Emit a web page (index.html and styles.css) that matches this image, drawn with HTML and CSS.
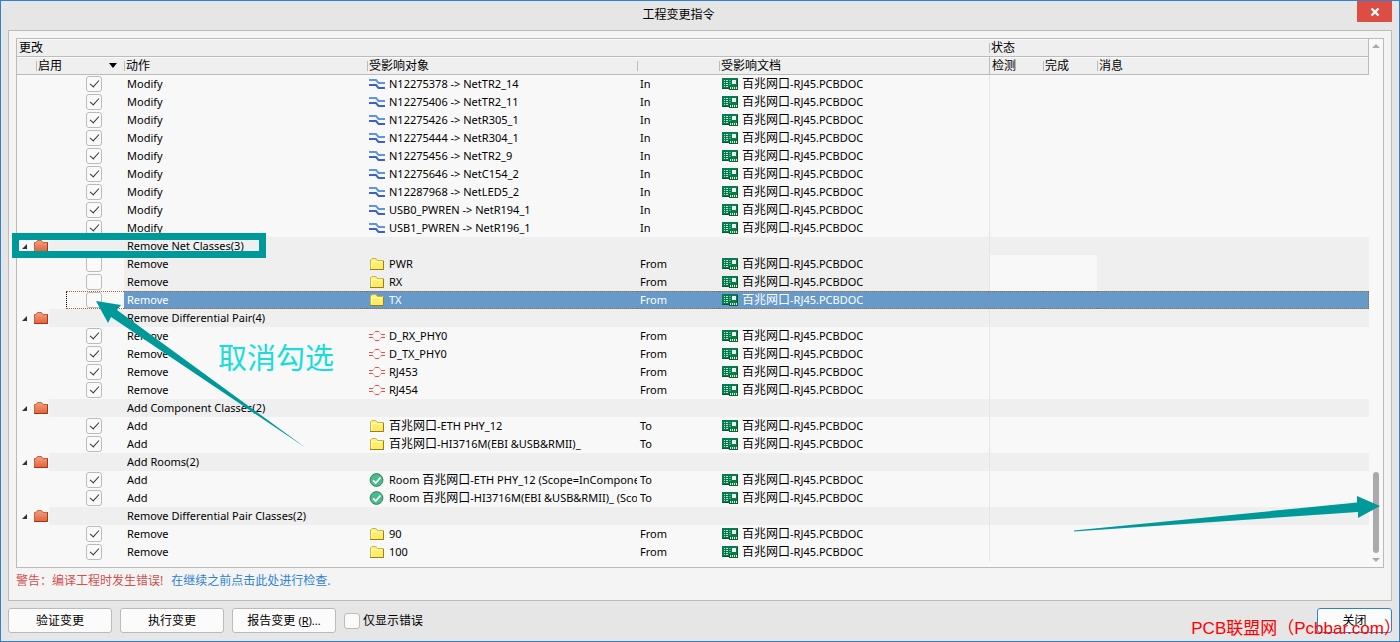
FILE: index.html
```html
<!DOCTYPE html>
<html lang="zh-CN">
<head>
<meta charset="utf-8">
<title>工程变更指令</title>
<link rel="stylesheet" href="styles.css">
</head>
<body>
<svg class="defs" aria-hidden="true">
  <linearGradient id="g-red" x1="0" y1="0" x2="0" y2="1"><stop offset="0" stop-color="#f4a080"/><stop offset="1" stop-color="#dc6440"/></linearGradient>
  <linearGradient id="g-yellow" x1="0" y1="0" x2="0" y2="1"><stop offset="0" stop-color="#fff27a"/><stop offset="1" stop-color="#ffe95e"/></linearGradient>
  <symbol id="group" viewBox="0 0 16 14"><path d="M.500 12.500v-9h1.500l1.500-2h4l1.500 2h5v9z" fill="url(#g-red)"/><path d="M.500 12.500v-9h1.500l1.500-2h4l1.500 2h5" fill="none" stroke="#d0603a"/><path d="M0 12.500h13.500v-9" fill="none" stroke="#b83008"/></symbol>
  <symbol id="folder" viewBox="0 0 16 14"><path d="M1.500 12.500v-9.500l1.500-1.500h4l1.500 2h6v9z" fill="url(#g-yellow)" stroke="#cdb43c"/><path d="M2.500 11.500v-7h5l1 .500h5" fill="none" stroke="#fffbc8"/><path d="M1 12.500h13.500v-8.500" fill="none" stroke="#978016"/></symbol>
  <symbol id="net" viewBox="0 0 16 12"><path d="M0 2h7l2.500 3H16" fill="none" stroke="#5e94e0" stroke-width="2"/><path d="M0 7h7l2.500 3H16" fill="none" stroke="#3c62c8" stroke-width="2"/></symbol>
  <symbol id="pair" viewBox="0 0 16 12"><path d="M0 4.500h4M0 7.500h4M12 4.500h4M12 7.500h4M6 1.500h4M6 10.500h4" stroke="#f04848"/><path d="M4 4.500l2-3M10 1.500l2 3M4 7.500l2 3M10 10.500l2-3" stroke="#f4aaaa" fill="none"/></symbol>
  <symbol id="room" viewBox="0 0 16 14"><circle cx="7.500" cy="7" r="6.400" fill="#45bd8c" stroke="#3b8067"/><path d="M4 7.300l2.700 2.700 4.800-5.500" fill="none" stroke="#fff" stroke-width="1.800"/></symbol>
  <symbol id="pcb" viewBox="0 0 16 12"><path d="M0 0h16v12H7v-1H0z" fill="#087a50"/><path d="M0 10.500h7M7.500 8v4h8V1" fill="none" stroke="#04553a"/><path d="M2 2.500h4M2 4.500h4M2 6.500h4M2 8.500h4" stroke="#b5e3c8"/><path d="M3.500 2v7" stroke="#087a50"/><path d="M7 2.500h2M7 4.500h2M7 6.500h2" stroke="#2fba7e"/><path d="M10 2h4v4h-4z" fill="#e9f5ee"/><path d="M8.500 9v2M10.500 9v2M12.500 9v2M14.500 9v2" stroke="#f7f3b0"/></symbol>
</svg>
<div class="window">
  <header class="titlebar">
    <h1>工程变更指令</h1>
    <button class="close" aria-label="关闭窗口"><svg width="10" height="10" viewBox="0 0 10 10"><path d="M1.500 1.500l7 7M8.500 1.500l-7 7" stroke="#fff" stroke-width="2.400"/></svg></button>
  </header>
  <main class="panel">
    <div class="list">
      <table>
        <colgroup><col class="c-tree"><col class="c-gap"><col class="c-check"><col class="c-action"><col class="c-object"><col class="c-dir"><col class="c-doc"><col class="c-state"><col class="c-done"><col></colgroup>
        <thead>
          <tr><th colspan="7">更改</th><th colspan="3" class="tick">状态</th></tr>
          <tr><th colspan="3" class="enable"><div><span>启用</span><svg width="8" height="5" viewBox="0 0 8 5"><path d="M0 0h8L4 5z"/></svg></div></th><th class="tick">动作</th><th class="tick">受影响对象</th><th class="tick"></th><th class="tick">受影响文档</th><th class="full">检测</th><th class="tick">完成</th><th class="tick">消息</th></tr>
        </thead>
        <tbody>
          <tr><td><td><td class="check"><input type="checkbox" checked aria-label="N12275378"><td>Modify<td><div class="item"><svg class="i12"><use href="#net"/></svg><span>N12275378 -&gt; NetTR2_14</span></div><td>In<td><div class="item doc"><svg class="i12"><use href="#pcb"/></svg><span><b>百兆网口</b>-RJ45.PCBDOC</span></div><td><td><td></tr>
          <tr><td><td><td class="check"><input type="checkbox" checked aria-label="N12275406"><td>Modify<td><div class="item"><svg class="i12"><use href="#net"/></svg><span>N12275406 -&gt; NetTR2_11</span></div><td>In<td><div class="item doc"><svg class="i12"><use href="#pcb"/></svg><span><b>百兆网口</b>-RJ45.PCBDOC</span></div><td><td><td></tr>
          <tr><td><td><td class="check"><input type="checkbox" checked aria-label="N12275426"><td>Modify<td><div class="item"><svg class="i12"><use href="#net"/></svg><span>N12275426 -&gt; NetR305_1</span></div><td>In<td><div class="item doc"><svg class="i12"><use href="#pcb"/></svg><span><b>百兆网口</b>-RJ45.PCBDOC</span></div><td><td><td></tr>
          <tr><td><td><td class="check"><input type="checkbox" checked aria-label="N12275444"><td>Modify<td><div class="item"><svg class="i12"><use href="#net"/></svg><span>N12275444 -&gt; NetR304_1</span></div><td>In<td><div class="item doc"><svg class="i12"><use href="#pcb"/></svg><span><b>百兆网口</b>-RJ45.PCBDOC</span></div><td><td><td></tr>
          <tr><td><td><td class="check"><input type="checkbox" checked aria-label="N12275456"><td>Modify<td><div class="item"><svg class="i12"><use href="#net"/></svg><span>N12275456 -&gt; NetTR2_9</span></div><td>In<td><div class="item doc"><svg class="i12"><use href="#pcb"/></svg><span><b>百兆网口</b>-RJ45.PCBDOC</span></div><td><td><td></tr>
          <tr><td><td><td class="check"><input type="checkbox" checked aria-label="N12275646"><td>Modify<td><div class="item"><svg class="i12"><use href="#net"/></svg><span>N12275646 -&gt; NetC154_2</span></div><td>In<td><div class="item doc"><svg class="i12"><use href="#pcb"/></svg><span><b>百兆网口</b>-RJ45.PCBDOC</span></div><td><td><td></tr>
          <tr><td><td><td class="check"><input type="checkbox" checked aria-label="N12287968"><td>Modify<td><div class="item"><svg class="i12"><use href="#net"/></svg><span>N12287968 -&gt; NetLED5_2</span></div><td>In<td><div class="item doc"><svg class="i12"><use href="#pcb"/></svg><span><b>百兆网口</b>-RJ45.PCBDOC</span></div><td><td><td></tr>
          <tr><td><td><td class="check"><input type="checkbox" checked aria-label="USB0_PWREN"><td>Modify<td><div class="item"><svg class="i12"><use href="#net"/></svg><span>USB0_PWREN -&gt; NetR194_1</span></div><td>In<td><div class="item doc"><svg class="i12"><use href="#pcb"/></svg><span><b>百兆网口</b>-RJ45.PCBDOC</span></div><td><td><td></tr>
          <tr><td><td><td class="check"><input type="checkbox" checked aria-label="USB1_PWREN"><td>Modify<td><div class="item"><svg class="i12"><use href="#net"/></svg><span>USB1_PWREN -&gt; NetR196_1</span></div><td>In<td><div class="item doc"><svg class="i12"><use href="#pcb"/></svg><span><b>百兆网口</b>-RJ45.PCBDOC</span></div><td><td><td></tr>
          <tr class="group"><td><div class="tree"><svg class="tri"><path d="M5 0v5H0z"/></svg><svg class="i14"><use href="#group"/></svg></div><td><td><td>Remove Net Classes(3)<td><td><td><td><td><td></tr>
          <tr class="related"><td><td><td class="check"><input type="checkbox" aria-label="PWR"><td>Remove<td><div class="item"><svg class="i14"><use href="#folder"/></svg><span>PWR</span></div><td>From<td><div class="item doc"><svg class="i12"><use href="#pcb"/></svg><span><b>百兆网口</b>-RJ45.PCBDOC</span></div><td><td><td></tr>
          <tr class="related"><td><td><td class="check"><input type="checkbox" aria-label="RX"><td>Remove<td><div class="item"><svg class="i14"><use href="#folder"/></svg><span>RX</span></div><td>From<td><div class="item doc"><svg class="i12"><use href="#pcb"/></svg><span><b>百兆网口</b>-RJ45.PCBDOC</span></div><td><td><td></tr>
          <tr class="selected"><td><td><td class="check"><input type="checkbox" aria-label="TX"><td>Remove<td><div class="item"><svg class="i14"><use href="#folder"/></svg><span>TX</span></div><td>From<td><div class="item doc"><svg class="i12"><use href="#pcb"/></svg><span><b>百兆网口</b>-RJ45.PCBDOC</span></div><td><td><td></tr>
          <tr class="group"><td><div class="tree"><svg class="tri"><path d="M5 0v5H0z"/></svg><svg class="i14"><use href="#group"/></svg></div><td><td><td>Remove Differential Pair(4)<td><td><td><td><td><td></tr>
          <tr><td><td><td class="check"><input type="checkbox" checked aria-label="D_RX_PHY0"><td>Remove<td><div class="item"><svg class="i12"><use href="#pair"/></svg><span>D_RX_PHY0</span></div><td>From<td><div class="item doc"><svg class="i12"><use href="#pcb"/></svg><span><b>百兆网口</b>-RJ45.PCBDOC</span></div><td><td><td></tr>
          <tr><td><td><td class="check"><input type="checkbox" checked aria-label="D_TX_PHY0"><td>Remove<td><div class="item"><svg class="i12"><use href="#pair"/></svg><span>D_TX_PHY0</span></div><td>From<td><div class="item doc"><svg class="i12"><use href="#pcb"/></svg><span><b>百兆网口</b>-RJ45.PCBDOC</span></div><td><td><td></tr>
          <tr><td><td><td class="check"><input type="checkbox" checked aria-label="RJ453"><td>Remove<td><div class="item"><svg class="i12"><use href="#pair"/></svg><span>RJ453</span></div><td>From<td><div class="item doc"><svg class="i12"><use href="#pcb"/></svg><span><b>百兆网口</b>-RJ45.PCBDOC</span></div><td><td><td></tr>
          <tr><td><td><td class="check"><input type="checkbox" checked aria-label="RJ454"><td>Remove<td><div class="item"><svg class="i12"><use href="#pair"/></svg><span>RJ454</span></div><td>From<td><div class="item doc"><svg class="i12"><use href="#pcb"/></svg><span><b>百兆网口</b>-RJ45.PCBDOC</span></div><td><td><td></tr>
          <tr class="group"><td><div class="tree"><svg class="tri"><path d="M5 0v5H0z"/></svg><svg class="i14"><use href="#group"/></svg></div><td><td><td>Add Component Classes(2)<td><td><td><td><td><td></tr>
          <tr><td><td><td class="check"><input type="checkbox" checked aria-label="ETH PHY_12"><td>Add<td><div class="item"><svg class="i14"><use href="#folder"/></svg><span><b>百兆网口</b>-ETH PHY_12</span></div><td>To<td><div class="item doc"><svg class="i12"><use href="#pcb"/></svg><span><b>百兆网口</b>-RJ45.PCBDOC</span></div><td><td><td></tr>
          <tr><td><td><td class="check"><input type="checkbox" checked aria-label="HI3716M"><td>Add<td><div class="item"><svg class="i14"><use href="#folder"/></svg><span><b>百兆网口</b>-HI3716M(EBI &amp;USB&amp;RMII)_</span></div><td>To<td><div class="item doc"><svg class="i12"><use href="#pcb"/></svg><span><b>百兆网口</b>-RJ45.PCBDOC</span></div><td><td><td></tr>
          <tr class="group"><td><div class="tree"><svg class="tri"><path d="M5 0v5H0z"/></svg><svg class="i14"><use href="#group"/></svg></div><td><td><td>Add Rooms(2)<td><td><td><td><td><td></tr>
          <tr><td><td><td class="check"><input type="checkbox" checked aria-label="Room ETH PHY_12"><td>Add<td><div class="item"><svg class="i14"><use href="#room"/></svg><span>Room <b>百兆网口</b>-ETH PHY_12 (Scope=InCompone</span></div><td>To<td><div class="item doc"><svg class="i12"><use href="#pcb"/></svg><span><b>百兆网口</b>-RJ45.PCBDOC</span></div><td><td><td></tr>
          <tr><td><td><td class="check"><input type="checkbox" checked aria-label="Room HI3716M"><td>Add<td><div class="item"><svg class="i14"><use href="#room"/></svg><span>Room <b>百兆网口</b>-HI3716M(EBI &amp;USB&amp;RMII)_ (Scop</span></div><td>To<td><div class="item doc"><svg class="i12"><use href="#pcb"/></svg><span><b>百兆网口</b>-RJ45.PCBDOC</span></div><td><td><td></tr>
          <tr class="group"><td><div class="tree"><svg class="tri"><path d="M5 0v5H0z"/></svg><svg class="i14"><use href="#group"/></svg></div><td><td><td>Remove Differential Pair Classes(2)<td><td><td><td><td><td></tr>
          <tr><td><td><td class="check"><input type="checkbox" checked aria-label="90"><td>Remove<td><div class="item"><svg class="i14"><use href="#folder"/></svg><span>90</span></div><td>From<td><div class="item doc"><svg class="i12"><use href="#pcb"/></svg><span><b>百兆网口</b>-RJ45.PCBDOC</span></div><td><td><td></tr>
          <tr><td><td><td class="check"><input type="checkbox" checked aria-label="100"><td>Remove<td><div class="item"><svg class="i14"><use href="#folder"/></svg><span>100</span></div><td>From<td><div class="item doc"><svg class="i12"><use href="#pcb"/></svg><span><b>百兆网口</b>-RJ45.PCBDOC</span></div><td><td><td></tr>
        </tbody>
      </table>
      <div class="scrollbar">
        <svg width="8" height="4" viewBox="0 0 8 4"><path d="M0 4h8L4 0z"/></svg>
        <div class="thumb"></div>
        <svg width="8" height="4" viewBox="0 0 8 4"><path d="M0 0h8L4 4z"/></svg>
      </div>
    </div>
    <p class="warning">警告：编译工程时发生错误! <a href="#check">在继续之前点击此处进行检查.</a></p>
  </main>
  <footer class="actions">
    <button>验证变更</button>
    <button>执行变更</button>
    <button>报告变更 <span class="key">(<u>R</u>)...</span></button>
    <label><input type="checkbox">仅显示错误</label>
    <button class="primary">关闭</button>
  </footer>
  <svg class="mark mark-left" width="310" height="460" viewBox="0 0 310 460" aria-hidden="true">
    <rect x="15.500" y="236.500" width="247" height="18" fill="none" stroke="#009999" stroke-width="7"/>
    <path d="M96 301L121 305L117 310L306 448L111 317L108 323z" fill="#009999"/>
  </svg>
  <svg class="mark mark-right" width="310" height="36" viewBox="0 0 310 36" aria-hidden="true">
    <path d="M0 35.500L0 34.500L283 6.500V0L306 10L284 22V16z" fill="#009999"/>
  </svg>
  <div class="note">取消勾选</div>
  <div class="watermark">PCB联盟网（Pcbbar.com）</div>
</div>
</body>
</html>
```
FILE: styles.css
```css
* { box-sizing: border-box; }

body {
  margin: 0;
  color: #000;
  font: 12px/16px "Noto Sans", "Noto Sans CJK SC", sans-serif;
}

.defs { position: absolute; width: 0; height: 0; }

.window {
  position: relative;
  display: flex;
  flex-direction: column;
  min-height: 100vh;
  padding: 0 7px 8px;
  background: #e6e6e6;
  border: 1px solid #2f82d3;
}

.titlebar {
  display: flex;
  align-items: flex-start;
  height: 29px;
}
.titlebar h1 {
  flex: 1;
  margin: 0;
  padding-right: 8px;
  font-size: 12px;
  font-weight: 400;
  line-height: 28px;
  text-align: center;
}
.close {
  display: flex;
  align-items: center;
  justify-content: center;
  width: 35px;
  height: 21px;
  padding: 0;
  background: #de4d43;
  border: 0;
}

.panel {
  flex: 1;
  display: flex;
  flex-direction: column;
  padding: 7px;
  background: #f4f4f4;
  border: 1px solid #bbb;
}
.list {
  flex: 1;
  display: flex;
  align-items: flex-start;
  background: #f8f8f8;
  border: 1px solid #bbb;
}

table {
  flex: 1;
  width: 0;
  table-layout: fixed;
  border-collapse: separate;
  border-spacing: 0;
}
.c-tree { width: 32px; }
.c-gap { width: 17px; }
.c-check { width: 58px; }
.c-action { width: 243px; }
.c-object { width: 270px; }
.c-dir { width: 82px; }
.c-doc { width: 270px; }
.c-state { width: 54px; }
.c-done { width: 54px; }

th {
  height: 18px;
  padding: 0 0 0 2px;
  font-size: 12px;
  font-weight: 400;
  line-height: 16px;
  text-align: left;
  background: #efefef;
  border-bottom: 1px solid #bbb;
  box-shadow: inset 0 1px #fafafa;
}
th:last-child { border-right: 1px solid #bbb; }
.tick {
  background: linear-gradient(#bbb, #bbb) 0 4px / 1px 10px no-repeat #efefef;
}
.full { border-left: 1px solid #bbb; }
.enable {
  padding-left: 19px;
  background: linear-gradient(#bbb, #bbb) 19px 4px / 1px 10px no-repeat #efefef;
}
.enable div {
  display: flex;
  align-items: center;
  justify-content: space-between;
  padding: 0 7px 0 2px;
}

td {
  height: 18px;
  padding: 0 0 0 3px;
  font-size: 11px;
  line-height: 16px;
  white-space: nowrap;
}
td:nth-child(8) { border-left: 1px solid #e4e4e4; }
td:nth-child(5) { padding-left: 2px; }
td b { font-size: 12px; font-weight: 400; line-height: 16px; }
.check { padding: 0 0 0 20px; }
.item, .tree {
  display: flex;
  align-items: center;
  gap: 4px;
  height: 16px;
}
.item { overflow: hidden; }
.tree { gap: 7px; padding-left: 2px; }
.item svg, .tree svg { flex: none; }
.i12 { width: 16px; height: 12px; }
.i14 { width: 16px; height: 14px; }
.tri { width: 5px; height: 5px; fill: #333; }

.group td:nth-child(n+2), .related td:nth-child(n+4) { background: #efefef; }
.related td:nth-child(8), .related td:nth-child(9) { background: #f8f8f8; }
.selected td:nth-child(n+3) {
  border-top: 1px dotted #a06a38;
  border-bottom: 1px dotted #a06a38;
}
.selected td:nth-child(n+4) { color: #fff; background-color: #689ac9; }
.selected td:nth-child(8) { border-left-color: #7398bd; }
.selected td:last-child { border-right: 1px dotted #a06a38; }
.selected .check {
  padding-left: 19px;
  border-left: 1px dotted #000;
  border-top-color: #000;
  border-bottom-color: #000;
}

input[type="checkbox"] {
  appearance: none;
  display: block;
  flex: none;
  width: 16px;
  height: 16px;
  margin: 0;
  background: #fafafa;
  border: 1px solid #bbb;
  border-radius: 3px;
}
input:checked::after {
  content: "";
  display: block;
  width: 4px;
  height: 8px;
  margin: 1px 0 0 5px;
  border: solid #333;
  border-width: 0 1px 1px 0;
  transform: rotate(42deg);
}

.scrollbar {
  display: flex;
  flex-direction: column;
  align-items: center;
  align-self: stretch;
  width: 14px;
  padding: 5px 0;
  fill: #aaa;
}
.thumb {
  width: 6px;
  height: 81px;
  margin: auto 0 5px;
  background: #aaaaac;
  border-radius: 3px;
}

.warning {
  margin: 0;
  padding: 5px 0 4px;
  color: #d05050;
}
.warning a { margin-left: 5px; color: #2f82d3; text-decoration: none; }

.actions {
  display: flex;
  align-items: center;
  gap: 8px;
  padding-top: 7px;
}
button { color: #000; font: inherit; }
.actions button {
  width: 104px;
  height: 25px;
  padding: 0;
  background: #fbfbfb;
  border: 1px solid #bbb;
  border-radius: 3px;
}
.key { font-size: 11px; }
.actions label { display: flex; align-items: center; gap: 3px; }
.actions .primary {
  width: 75px;
  margin-left: auto;
  border-color: #2f82d3;
}

.mark, .note, .watermark { position: absolute; pointer-events: none; }
.mark-left { top: -1px; left: -1px; }
.mark-right { top: 495px; right: 15px; }
.note {
  top: 339px;
  left: 217px;
  color: #19dddd;
  font-size: 29px;
  line-height: 36px;
}
.watermark {
  right: -2px;
  bottom: 1px;
  color: #f00;
  font: 17px/22px "Liberation Sans", "Noto Sans CJK SC", sans-serif;
  white-space: nowrap;
}
```
